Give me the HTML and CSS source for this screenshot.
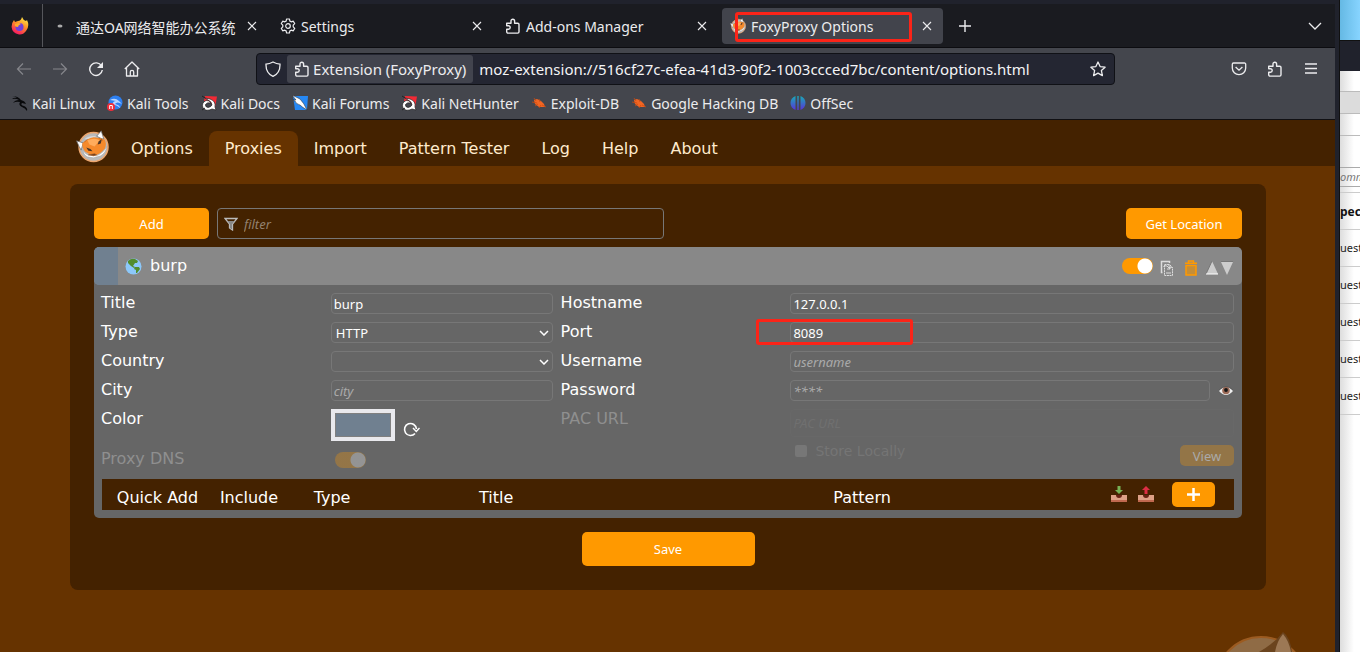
FILE: index.html
```html
<!DOCTYPE html>
<html lang="en">
<head>
<meta charset="utf-8">
<title>FoxyProxy Options</title>
<link rel="stylesheet" href="styles.css">
</head>
<body>
<svg class="defs" aria-hidden="true">
  <symbol id="close" viewBox="0 0 16 16"><path d="M4 4l8 8M12 4l-8 8" fill="none" stroke="currentColor" stroke-width="1.1"/></symbol>
  <symbol id="puzzle" viewBox="0 0 16 16"><path d="M1.7 5.2H6V3a1.8 1.8 0 0 1 3.6 0v2.2h3.1a1.3 1.3 0 0 1 1.3 1.3v7.3a1.3 1.3 0 0 1-1.3 1.3H3a1.3 1.3 0 0 1-1.3-1.3v-2.6h1.8a1.7 1.7 0 0 0 0-3.4H1.7z" fill="none" stroke="currentColor" stroke-width="1.4" stroke-linejoin="round"/></symbol>
  <symbol id="fox" viewBox="0 0 32 32">
    <circle cx="17" cy="16.500" r="14" fill="#b9b9b9" stroke="#eda66d" stroke-width="1.500"/>
    <path d="M8 9Q13 5 20 6L14 9Z" fill="#d8d8d8"/>
    <path d="M.5 10.500L7 12.500L5 19.500L3 16Z" fill="#fff" stroke="#666" stroke-width=".7"/>
    <path d="M20 6L24.500 .8L27 9L24 8Z" fill="#fff" stroke="#666" stroke-width=".7"/>
    <path d="M7 19Q8 23 12 24.500L20 25Q27 22 30 16Q29 22 24 25L17 27L11 26Q7 24 7 19Z" fill="#fff" stroke="#999" stroke-width=".4"/>
    <path d="M6 13Q11 8 17 7L24 8L28 9.500Q30 14 28 18Q24 23 18 25Q13 24 9 21Q6 18 6 13Z" fill="#f58a2c"/>
    <path d="M11 10Q18 7 23 10L18 16L13 14Z" fill="#ffac5c"/>
    <path d="M10 17l4 1.500 2 2-4-.5zM21 14l1-3 3-2-1 4z" fill="#48362a"/>
    <path d="M12 24l6-1 2 1-3 1zM8 12l3-3M22 8l4 2" fill="#6b4023" stroke="#a85b22" stroke-width=".6"/>
  </symbol>
  <symbol id="bug" viewBox="0 0 16 16"><path d="M3 5L6 4L10 6L13 9L14 12L11 12L8 12L4 9Z" fill="#f26522"/><path d="M3 3l2 3M1 7l5 1M4 11l3-2M8 4l1 3M8 13l2-3M15 12l-4-2" stroke="#c94a12" stroke-width=".8"/></symbol>
  <symbol id="dragonred" viewBox="0 0 16 16"><path d="M4 1L16 1.500L14 13L10 8L3 6Z" fill="#f22a35"/><path d="M9 4Q15 6 14 12L15 15L11 14Q5 17 2 13Q0 8 5 5.500Q9 5 10 8Q6 7 4.500 9.500Q4 12 7 12.500Q10 12 11 10Q11 7 7 5L4 3Z" fill="#fff" stroke="#222" stroke-width=".7"/><path d="M1 1l3 2M1 15l3-2" stroke="#222"/></symbol>
</svg>
<div class="desktop">
  <section class="browser">
    <header class="tabbar">
      <div class="firefox"><svg width="18" height="18" viewBox="0 0 18 18"><defs><linearGradient id="ff" x1=".8" y1="0" x2=".3" y2="1"><stop offset="0" stop-color="#fff04a"/><stop offset=".45" stop-color="#ff9126"/><stop offset="1" stop-color="#f51164"/></linearGradient></defs><path d="M11 0Q12 3 15 4L16 3Q19 9 15 14Q12 18 8 17.500Q1 16 .6 10Q.5 6 3 3L4 5L7 4Q10 4 11 0Z" fill="url(#ff)"/><circle cx="8.500" cy="10" r="4" fill="#7340d8"/><path d="M4 7Q8 5 10 7Q7 8 7 10Q3 10 4 7Z" fill="#ffac28"/></svg></div>
      <div class="tab"><svg class="ic" viewBox="0 0 16 16"><ellipse cx="5" cy="8" rx="2.500" ry="1.500" fill="#aaa"/></svg><span>通达OA网络智能办公系统</span><button aria-label="Close tab"><svg class="ic"><use href="#close"/></svg></button></div>
      <div class="tab"><svg class="ic" viewBox="0 0 16 16" fill="none" stroke="currentColor" stroke-width="1.200" stroke-linejoin="round"><path d="M6.600 1h2.800l.5 2.100 1.300.7 2.100-.6 1.400 2.400-1.500 1.600v1.600l1.500 1.600-1.400 2.400-2.100-.6-1.300.7-.5 2.100H6.600l-.5-2.100-1.300-.7-2.100.6-1.400-2.400 1.500-1.600V7.200L1.300 5.600l1.400-2.400 2.100.6 1.300-.7z"/><circle cx="8" cy="8" r="2.300"/></svg><span>Settings</span><button aria-label="Close tab"><svg class="ic"><use href="#close"/></svg></button></div>
      <div class="tab"><svg class="ic"><use href="#puzzle"/></svg><span>Add-ons Manager</span><button aria-label="Close tab"><svg class="ic"><use href="#close"/></svg></button></div>
      <div class="tab active"><svg class="ic"><use href="#fox"/></svg><span>FoxyProxy Options</span><button aria-label="Close tab"><svg class="ic"><use href="#close"/></svg></button><i class="mark tab-mark"></i></div>
      <button class="newtab" aria-label="New tab"><svg class="ic" viewBox="0 0 16 16"><path d="M8 2v12M2 8h12" stroke="currentColor" stroke-width="1.400"/></svg></button>
      <button class="alltabs" aria-label="List all tabs"><svg class="ic" viewBox="0 0 16 16"><path d="M2 5l6 6 6-6" fill="none" stroke="currentColor" stroke-width="1.300"/></svg></button>
    </header>
    <div class="toolbar">
      <button class="tool dim" aria-label="Back"><svg class="ic" viewBox="0 0 16 16"><path d="M15 8H1.500M7 2.500L1.500 8 7 13.500" fill="none" stroke="currentColor" stroke-width="1.200"/></svg></button>
      <button class="tool dim" aria-label="Forward"><svg class="ic" viewBox="0 0 16 16"><path d="M1 8h13.500M9 2.500L14.500 8 9 13.500" fill="none" stroke="currentColor" stroke-width="1.200"/></svg></button>
      <button class="tool" aria-label="Reload"><svg class="ic" viewBox="0 0 16 16"><path d="M13.500 5A6.300 6.300 0 1 0 14.300 9" fill="none" stroke="currentColor" stroke-width="1.400"/><path d="M15 1v6H9z" fill="currentColor"/></svg></button>
      <button class="tool" aria-label="Home"><svg class="ic" viewBox="0 0 16 16" fill="none" stroke="currentColor" stroke-width="1.300" stroke-linejoin="round"><path d="M.8 8L8 1l7.200 7M2.500 6.800V15h11V6.800M6.300 15v-4a1.700 1.700 0 0 1 3.400 0v4"/></svg></button>
      <div class="spacer"></div>
      <div class="urlbar">
        <svg class="ic shield" viewBox="0 0 16 16"><path d="M8 1Q11.500 3 15 3.200Q15.300 12 8 15.300Q.7 12 1 3.200Q4.500 3 8 1Z" fill="none" stroke="currentColor" stroke-width="1.300"/></svg>
        <div class="chip"><svg class="ic"><use href="#puzzle"/></svg><span>Extension (FoxyProxy)</span></div>
        <input class="url" aria-label="Address" value="moz-extension://516cf27c-efea-41d3-90f2-1003ccced7bc/content/options.html">
        <button class="star" aria-label="Bookmark this page"><svg class="ic" viewBox="0 0 16 16"><path d="M8 1l2.100 4.600 5 .6-3.700 3.400 1 5L8 12.100l-4.400 2.500 1-5L.9 6.200l5-.6z" fill="none" stroke="currentColor" stroke-width="1.300" stroke-linejoin="round"/></svg></button>
      </div>
      <div class="spacer"></div>
      <button class="tool" aria-label="Pocket"><svg class="ic" viewBox="0 0 16 16" fill="none" stroke="currentColor" stroke-width="1.300"><path d="M2.500 2h11a1.200 1.200 0 0 1 1.200 1.200V7a6.700 6.700 0 0 1-13.400 0V3.200A1.200 1.200 0 0 1 2.500 2zM4.600 6L8 9.200 11.400 6"/></svg></button>
      <button class="tool" aria-label="Extensions"><svg class="ic"><use href="#puzzle"/></svg></button>
      <button class="tool" aria-label="Menu"><svg class="ic" viewBox="0 0 16 16"><path d="M2 3h12M2 7.500h12M2 12h12" stroke="currentColor" stroke-width="1.300"/></svg></button>
    </div>
    <nav class="bookmarks" aria-label="Bookmarks">
      <a href="#"><svg class="ic" viewBox="0 0 16 16"><path d="M0 1Q6 1 9 5Q13 6 14 9L10 8Q8 10 12 11Q16 13 15 16Q13 13 10 12Q6 10 8 7Q4 6 1 8Q3 5 7 5Q4 3 0 4Q2 2 5 3Q3 1 0 1Z" fill="#08090b"/></svg><span>Kali Linux</span></a>
      <a href="#"><svg class="ic" viewBox="0 0 16 16"><circle cx="8.500" cy="7.500" r="7" fill="#2d7ff0"/><path d="M3 5Q8 2 12 6L15 9Q10 6 8 9Q13 10 13 13Q8 9 5 10Q6 6 9 6Z" fill="#b7d4ff"/><circle cx="4" cy="12" r="4" fill="#ee2d3a"/><path d="M2.700 14v-3.500h2.600V14" fill="none" stroke="#fff"/></svg><span>Kali Tools</span></a>
      <a href="#"><svg class="ic"><use href="#dragonred"/></svg><span>Kali Docs</span></a>
      <a href="#"><svg class="ic" viewBox="0 0 16 16"><path d="M1 1H16L15 15H3Z" fill="#2688f4"/><path d="M0 0L8 4Q12 8 15 15Q10 12 8 10Q4 9 3 6L1 5L4 5Z" fill="#fff" stroke="#222" stroke-width=".5"/></svg><span>Kali Forums</span></a>
      <a href="#"><svg class="ic"><use href="#dragonred"/></svg><span>Kali NetHunter</span></a>
      <a href="#"><svg class="ic"><use href="#bug"/></svg><span>Exploit-DB</span></a>
      <a href="#"><svg class="ic"><use href="#bug"/></svg><span>Google Hacking DB</span></a>
      <a href="#"><svg class="ic" viewBox="0 0 16 16"><defs><linearGradient id="os" x2="0" y2="1"><stop stop-color="#18aab8"/><stop offset="1" stop-color="#5934d8"/></linearGradient></defs><path d="M5.500 1v14Q.5 13 .5 8Q.5 3 5.500 1ZM7.300 1h1.400v14H7.300zM10.500 1Q15.500 3 15.500 8Q15.500 13 10.500 15Z" fill="url(#os)"/></svg><span>OffSec</span></a>
    </nav>
    <main class="page">
      <nav class="menu" aria-label="FoxyProxy">
        <svg class="logo"><use href="#fox"/></svg>
        <a href="#">Options</a><a href="#" class="current">Proxies</a><a href="#">Import</a><a href="#">Pattern Tester</a><a href="#">Log</a><a href="#">Help</a><a href="#">About</a>
      </nav>
      <div class="panel">
        <div class="actions">
          <button class="btn add">Add</button>
          <label class="filter"><svg width="14" height="14" viewBox="0 0 14 14"><path d="M1 1.500h12L8.500 7v6l-3-2V7z" fill="none" stroke="#bbb" stroke-width="1.300"/><path d="M3.500 4h7L8 7v5l-2-1V7z" fill="#888"/></svg><input aria-label="Filter" placeholder="filter"></label>
          <button class="btn locate">Get Location</button>
        </div>
        <article class="proxy">
          <header class="proxy-head">
            <span class="swatch"></span>
            <svg width="17" height="17" viewBox="0 0 17 17"><circle cx="8.500" cy="8.500" r="8" fill="#8cc8fa"/><path d="M3 3Q6 0 10 1L13 3L12 5L10 5L8 8L10 9L9 10L6 8L3 5ZM10 9L14 9L15 11L12 15L11 15L11 12L9 11Z" fill="#528d2d"/></svg>
            <span class="name">burp</span>
            <input type="checkbox" class="toggle" aria-label="Enable burp" checked>
            <button class="mini copy" aria-label="Duplicate"><svg width="14" height="16" viewBox="0 0 14 16" fill="none" stroke="#ddd"><path d="M2.500 12.500H1.500V1.500h8V3" stroke-width="1.500"/><path d="M4.500 4.500h5l3 3v8h-8zM9 4.500v3h3.500" stroke-dasharray="2 .6"/><path d="M3.500 7Q4 5 7 6l3 3M10 6v3H7M6 13h5"/></svg></button>
            <button class="mini trash" aria-label="Delete"><svg width="14" height="16" viewBox="0 0 14 16"><path d="M1 3.200h12M4.500 3V1h5v2" fill="none" stroke="#f90" stroke-width="1.500"/><path d="M2 5.500h10v9.500H2z" fill="#c58e38" stroke="#f90" stroke-width="1.500"/></svg></button>
            <button class="mini" aria-label="Move up"><svg width="14" height="14" viewBox="0 0 14 14"><path d="M7 0l6 13H1z" fill="#ccc"/><path d="M1 13L7 0" stroke="#777"/><path d="M1 13h12" stroke="#fff"/></svg></button>
            <button class="mini" aria-label="Move down"><svg width="14" height="14" viewBox="0 0 14 14"><path d="M1 1h12L7 14z" fill="#ccc"/><path d="M1 .5h12" stroke="#777"/></svg></button>
          </header>
          <div class="proxy-body">
            <div class="fields">
              <label for="title">Title</label><input class="box" id="title" value="burp">
              <label for="host">Hostname</label><input class="box" id="host" value="127.0.0.1">
              <label for="type">Type</label><div class="select"><select class="box" id="type"><option>HTTP</option></select><svg viewBox="0 0 10 6"><path d="M1 1l4 4 4-4" fill="none" stroke="#fff" stroke-width="1.500"/></svg></div>
              <label for="port">Port</label><div class="port"><input class="box" id="port" value="8089"><i class="mark port-mark"></i></div>
              <label for="country">Country</label><div class="select"><select class="box" id="country"><option></option></select><svg viewBox="0 0 10 6"><path d="M1 1l4 4 4-4" fill="none" stroke="#fff" stroke-width="1.500"/></svg></div>
              <label for="user">Username</label><input class="box" id="user" placeholder="username">
              <label for="city">City</label><input class="box" id="city" placeholder="city">
              <label for="pass">Password</label><div class="pass"><input class="box" id="pass" type="password" placeholder="****"><button class="mini" aria-label="Show password"><svg width="16" height="12" viewBox="0 0 16 12"><path d="M1 6Q8-2 15 6Q8 14 1 6Z" fill="#eee"/><circle cx="8" cy="5.500" r="3.800" fill="#9c6b58"/><circle cx="8" cy="5" r="1.900" fill="#151515"/><path d="M1 5Q8-2 15 5" fill="none" stroke="#555" stroke-width=".7"/></svg></button></div>
              <label for="color">Color</label><div class="color"><input type="color" id="color" value="#708090"><button class="mini" aria-label="Random color"><svg width="17" height="16" viewBox="0 0 17 16"><path d="M12 12.500A6 6 0 1 1 13.500 8" fill="none" stroke="#fff" stroke-width="1.600"/><path d="M10 7l3.300 3.500L16.500 7" fill="none" stroke="#fff" stroke-width="1.400"/></svg></button></div>
              <label for="pac" class="off">PAC URL</label>
              <div class="pac"><input class="box" id="pac" placeholder="PAC URL" disabled><div class="store"><label><input type="checkbox" disabled>Store Locally</label><button class="btn view" disabled>View</button></div></div>
              <label for="dns" class="off">Proxy DNS</label><div class="dns"><input type="checkbox" class="toggle" id="dns" checked disabled></div>
            </div>
            <div class="patterns">
              <span>Quick Add</span><span>Include</span><span>Type</span><span>Title</span><span>Pattern</span>
              <div class="pattern-tools">
                <button class="mini" aria-label="Import patterns"><svg width="16" height="17" viewBox="0 0 16 17"><path d="M0 9h16v7H0z" fill="#dda086"/><path d="M0 14h16v2H0z" fill="#c1694f"/><path d="M5 9h6q0 3-3 3T5 9z" fill="#662113"/><path d="M6.500 0h3v4H12L8 8 4 4h2.500z" fill="#77b255"/></svg></button>
                <button class="mini" aria-label="Export patterns"><svg width="16" height="17" viewBox="0 0 16 17"><path d="M0 9h16v7H0z" fill="#dda086"/><path d="M0 14h16v2H0z" fill="#c1694f"/><path d="M5 9h6q0 3-3 3T5 9z" fill="#662113"/><path d="M6.500 8h3V4H12L8 0 4 4h2.500z" fill="#dd2e44"/></svg></button>
                <button class="btn plus" aria-label="Add pattern"><svg width="13" height="13" viewBox="0 0 13 13"><path d="M6.500 0v13M0 6.500h13" stroke="#fff" stroke-width="2.500"/></svg></button>
              </div>
            </div>
          </div>
        </article>
        <button class="btn save">Save</button>
      </div>
      <svg class="watermark" width="100" height="20" viewBox="0 0 100 20"><circle cx="44" cy="50" r="45" fill="#8f6b45" stroke="#9c5b20" stroke-width="2"/><path d="M42 20Q58 11 66 0Q73 5 75 20Z" fill="#6b441e"/><path d="M58 20Q60 9 66 2Q72 9 74 20Z" fill="#9c7855"/></svg>
    </main>
  </section>
  <aside class="behind">
    <div class="sky"></div><div class="bar"></div><div class="blank"></div><div class="tabs"></div><div class="strip"></div><div class="gap"></div>
    <div class="hint">omm</div><div class="thin"></div><div class="head">pec</div>
    <div class="row">uest</div><div class="row">uest</div><div class="row">uest</div><div class="row">uest</div><div class="row">uest</div>
  </aside>
</div>
</body>
</html>
```
FILE: styles.css
```css
* { box-sizing: border-box; }
body { margin: 0; background: #630; font-family: "Noto Sans", "Noto Sans CJK SC", sans-serif; font-size: 14px; }
button { border: 0; padding: 0; margin: 0; background: none; color: inherit; font: inherit; display: flex; align-items: center; justify-content: center; }
input, select { font-family: inherit; margin: 0; }
a { color: inherit; text-decoration: none; }
svg { display: block; flex: none; }
.defs { position: absolute; width: 0; height: 0; }
.ic { width: 16px; height: 16px; }
.desktop { display: flex; height: 100vh; overflow: hidden; }
.browser { flex: 1; min-width: 0; display: flex; flex-direction: column; background: #20222c; border-top: 4px solid #20222c; border-right: 4px solid #20222c; color: #ececee; }

.tabbar { display: flex; align-items: center; height: 44px; flex: none; background: #1a1b20; border-bottom: 1px solid #0c0c10; }
.firefox { width: 43px; height: 43px; margin-right: 2px; padding-left: 11px; border-right: 1px solid #55565b; display: flex; align-items: center; }
.tab { position: relative; flex: 0 1 221px; height: 36px; margin: 0 2px; padding: 0 8px; display: flex; align-items: center; gap: 5px; border-radius: 4px; }
.tab span { flex: 1; padding-top: 2px; white-space: nowrap; }
.tab button { margin-left: -5px; }
.tab.active { background: #42444c; }
.newtab { margin-left: 12px; }
.alltabs { margin-left: auto; margin-right: 12px; }
.mark { position: absolute; border: 3px solid #fb2418; border-radius: 3px; pointer-events: none; }
.tab-mark { left: 13px; top: 4px; width: 177px; height: 30px; }

.toolbar { display: flex; align-items: center; height: 41px; flex: none; padding: 0 6px; background: #44464d; }
.tool { width: 36px; height: 32px; flex: none; }
.dim { color: #85868b; }
.spacer { flex: 1; }
.urlbar { flex: 8; min-width: 0; height: 32px; display: flex; align-items: center; background: #242632; border: 1px solid #101116; border-radius: 4px; padding-right: 8px; font-size: 15px; }
.shield { margin: 0 6px 0 8px; }
.chip { display: flex; align-items: center; gap: 3px; height: 28px; padding: 0 7px; background: #42444e; border-radius: 3px; white-space: nowrap; }
.url { flex: 1; min-width: 0; border: 0; padding: 0 6px; background: none; color: #f4f4f6; font-size: 15px; }
.bookmarks { display: flex; align-items: center; gap: 12px; height: 31px; flex: none; padding: 0 12px 2px; background: #44464d; border-bottom: 1px solid #101014; }
.bookmarks a { display: flex; align-items: center; gap: 4px; white-space: nowrap; }

.page { position: relative; flex: 1; overflow: hidden; background: #630; color: #fff; font-family: "DejaVu Sans", sans-serif; font-size: 16px; }
.menu { display: flex; align-items: flex-end; height: 46px; padding-left: 76px; background: #420; color: #ffebcd; }
.logo { width: 33px; height: 33px; margin: 0 6px 3px 0; }
.menu a { height: 35px; padding: 0 16px; line-height: 36px; white-space: nowrap; }
.menu .current { background: #630; border-radius: 8px 8px 0 0; }
.panel { margin: 18px 69px 0 70px; padding: 24px; background: #420; border-radius: 8px; }
.btn { background: #f90; color: #fff; border-radius: 5px; font-family: "Noto Sans", sans-serif; font-size: 13px; }
.actions { display: flex; gap: 8px; height: 31px; margin-bottom: 8px; }
.add { width: 115px; }
.filter { flex: 0 1 447px; display: flex; align-items: center; gap: 4px; padding: 0 6px; border: 1px solid #777; border-radius: 4px; }
.filter input { flex: 1; border: 0; background: none; color: #fff; font-family: "Noto Sans", sans-serif; font-size: 13px; padding: 1px 2px; }
::placeholder { color: #aaa; font-style: italic; opacity: 1; }
.filter ::placeholder { color: #93816f; }
.locate { width: 116px; margin-left: auto; }
.proxy { background: #666; border-radius: 5px; overflow: hidden; }
.proxy-head { display: flex; align-items: center; height: 38px; padding-right: 7px; background: #888; border-radius: 5px; overflow: hidden; }
.swatch { width: 24px; align-self: stretch; margin-right: 7px; background: #708090; }
.name { flex: 1; margin-left: 8px; padding-bottom: 2px; }
.toggle { appearance: none; width: 31px; height: 16px; border-radius: 8px; background: radial-gradient(circle at 23px 8px, #fff 7px, #f90 8px); }
.toggle:disabled { opacity: .3; }
.copy { margin: 3px 10px 0 7px; }
.trash { margin: 3px 7px 0 0; }
.trash ~ .mini { margin: 4px 1px 0 0; }
.proxy-body { padding: 8px; }
.fields { display: grid; grid-template-columns: 1fr 1fr 1fr 2fr; grid-template-rows: repeat(4, 21px) 32px 22px; gap: 8px; margin-left: -1px; }
.fields > label { line-height: 19px; }
.off { color: #8f8f8f; }
.box { display: block; width: 100%; min-width: 0; height: 21px; padding: 0 2px; border: 1px solid #777; border-radius: 4px; background: none; color: #fff; font-family: "Noto Sans", sans-serif; font-size: 13px; }
.select, .port { position: relative; }
.select .box { appearance: none; padding-left: 4px; }
.select svg { position: absolute; right: 4px; top: 8px; width: 10px; height: 6px; }
.port-mark { left: -34px; top: -3px; width: 157px; height: 26px; }
.pass { display: flex; gap: 8px; }
.color { display: flex; align-items: center; gap: 8px; }
.color input { appearance: none; width: 64px; height: 32px; padding: 0; border: 4px solid #e9e9ed; background: none; }
.color input::-webkit-color-swatch-wrapper { padding: 0; }
.color input::-webkit-color-swatch { border: 1px solid #808080; border-radius: 0; }
.color .mini { padding-top: 7px; }
.pac { grid-row: 5 / 7; grid-column: 4; display: flex; flex-direction: column; gap: 8px; color: #757575; }
.pac .box { height: 28px; border-color: #686868; }
.pac ::placeholder { color: #707070; }
.store { display: flex; justify-content: space-between; height: 21px; font-size: 14px; }
.store label { display: flex; align-items: center; gap: 8px; height: 12px; }
.store input { appearance: none; width: 12px; height: 12px; margin-left: 5px; background: #777; border-radius: 2px; }
.view { width: 54px; background: #937547; color: #aaa; }
.dns { padding: 3px 0 0 4px; }
.dns .toggle { display: block; }
.patterns { display: grid; grid-template-columns: 111px 72px 94px 8fr 17fr 123px; align-items: center; height: 31px; margin-top: 8px; background: #420; text-align: center; line-height: 19px; }
.patterns > span { padding-top: 5px; }
.pattern-tools { display: flex; align-items: center; gap: 11px; }
.plus { width: 43px; height: 25px; margin-left: 7px; }
.save { width: 173px; height: 34px; margin: 14px auto 0; }
.watermark { position: absolute; right: 18px; bottom: 0; }

.behind { width: 21px; flex: none; overflow: hidden; background: linear-gradient(90deg, #ddd, #fff 14px); border-left: 1px solid #111; color: #222; font-size: 11px; white-space: nowrap; }
.sky { height: 40px; background: linear-gradient(90deg, #65b9e4, #87d4ff); }
.bar { height: 31px; background: #20222c; border-top: 1px solid #111; }
.blank { height: 20px; }
.tabs { height: 23px; background: #dcdcdc; border: solid #bbb; border-width: 1px 0; }
.strip { height: 22px; border-bottom: 1px solid #bbb; }
.gap { height: 32px; border-bottom: 1px solid #aaa; }
.hint { height: 19px; line-height: 18px; border-bottom: 1px solid #aaa; font-style: italic; color: #777; }
.thin { height: 6px; border-bottom: 1px solid #ccc; }
.head { height: 37px; line-height: 37px; border-bottom: 1px solid #ccc; font-size: 12px; font-weight: 700; color: #111; }
.row { height: 37px; line-height: 36px; border-bottom: 1px solid #ccc; }
```
